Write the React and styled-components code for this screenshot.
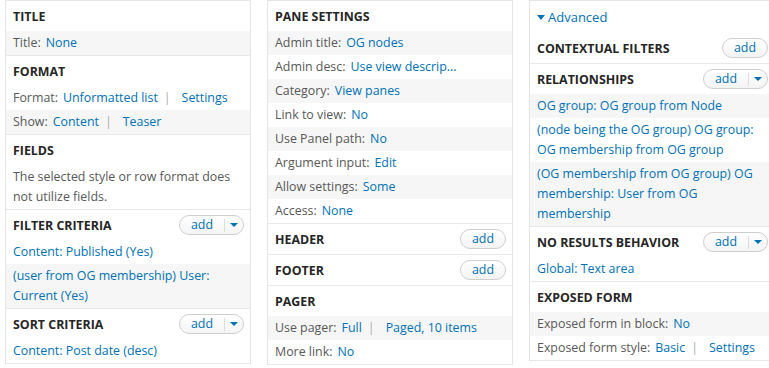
import React from "react";
import styled, { createGlobalStyle } from "styled-components";

const GlobalStyle = createGlobalStyle`
  html, body {
    margin: 0;
    padding: 0;
    background: #fff;
    overflow: hidden;
  }
  body {
    font-family: "Open Sans", "DejaVu Sans", sans-serif;
    font-size: 12.4px;
    color: #585858;
  }
`;

const Page = styled.div`
  display: flex;
  align-items: flex-start;
  gap: 16px;
  padding-left: 5px;
  width: 820px;
`;

const Column = styled.div`
  flex: 0 0 246px;
  box-sizing: border-box;
  border: 1px solid #e4e4e4;
  border-bottom: none;
`;

const Section = styled.div`
  border-bottom: 1px solid #e8e8e8;
`;

const Header = styled.div`
  display: flex;
  align-items: center;
  justify-content: space-between;
  height: 30px;
  padding: 0 6px 0 7px;
  font-weight: 700;
  color: #262626;
  text-transform: uppercase;
`;

const Row = styled.div`
  padding: 2px 7px;
  line-height: 20px;
  background: ${({ $alt }) => ($alt ? "#f6f6f6" : "transparent")};
`;

const Desc = styled.div`
  padding: 2px 7px;
  line-height: 20px;
`;

const Label = styled.span`
  margin-right: 5px;
`;

const Link = styled.a`
  color: #0071b8;
  text-decoration: none;
`;

const Pipe = styled.span`
  color: #aaa;
  margin: 0 11px 0 6px;
`;

const AddButton = styled.span`
  display: inline-flex;
  align-items: center;
  height: 20px;
  box-sizing: border-box;
  border: 1px solid #cfcfcf;
  border-radius: 10px;
  background: linear-gradient(#ffffff, #f4f4f4);
  font-weight: 400;
  text-transform: none;
  color: #0071b8;
`;

const ButtonLabel = styled.span`
  padding: 0 11px;
  line-height: 18px;
`;

const ButtonArrow = styled.span`
  display: flex;
  align-items: center;
  justify-content: center;
  width: 18px;
  height: 13px;
  border-left: 1px solid #dcdcdc;
`;

const Advanced = styled.div`
  display: flex;
  align-items: center;
  gap: 3px;
  height: 32px;
  padding-left: 7px;
  font-size: 13px;
  color: #0071b8;
`;

function Triangle({ w = 8, h = 5 }) {
  return (
    <svg width={w} height={h} viewBox={`0 0 ${w} ${h}`}>
      <polygon points={`0,0 ${w},0 ${w / 2},${h}`} fill="#0071b8" />
    </svg>
  );
}

function Button({ dropdown }) {
  return (
    <AddButton>
      <ButtonLabel>add</ButtonLabel>
      {dropdown && (
        <ButtonArrow>
          <Triangle w={8} h={4} />
        </ButtonArrow>
      )}
    </AddButton>
  );
}

const columns = [
  [
    { title: "Title", rows: [{ label: "Title:", values: ["None"], alt: true }] },
    {
      title: "Format",
      rows: [
        { label: "Format:", values: ["Unformatted list", "Settings"] },
        { label: "Show:", values: ["Content", "Teaser"], alt: true },
      ],
    },
    { title: "Fields", desc: "The selected style or row format does not utilize fields." },
    {
      title: "Filter criteria",
      button: "dropdown",
      rows: [
        { values: ["Content: Published (Yes)"] },
        { values: ["(user from OG membership) User: Current (Yes)"], alt: true },
      ],
    },
    {
      title: "Sort criteria",
      button: "dropdown",
      rows: [{ values: ["Content: Post date (desc)"] }],
    },
  ],
  [
    {
      title: "Pane settings",
      rows: [
        { label: "Admin title:", values: ["OG nodes"], alt: true },
        { label: "Admin desc:", values: ["Use view descrip..."] },
        { label: "Category:", values: ["View panes"], alt: true },
        { label: "Link to view:", values: ["No"] },
        { label: "Use Panel path:", values: ["No"], alt: true },
        { label: "Argument input:", values: ["Edit"] },
        { label: "Allow settings:", values: ["Some"], alt: true },
        { label: "Access:", values: ["None"] },
      ],
    },
    { title: "Header", button: "plain" },
    { title: "Footer", button: "plain" },
    {
      title: "Pager",
      rows: [
        { label: "Use pager:", values: ["Full", "Paged, 10 items"], alt: true },
        { label: "More link:", values: ["No"] },
      ],
    },
  ],
  [
    { advanced: true },
    { title: "Contextual filters", button: "plain" },
    {
      title: "Relationships",
      button: "dropdown",
      rows: [
        { values: ["OG group: OG group from Node"], alt: true },
        { values: ["(node being the OG group) OG group: OG membership from OG group"] },
        { values: ["(OG membership from OG group) OG membership: User from OG membership"], alt: true },
      ],
    },
    {
      title: "No results behavior",
      button: "dropdown",
      rows: [{ values: ["Global: Text area"] }],
    },
    {
      title: "Exposed form",
      rows: [
        { label: "Exposed form in block:", values: ["No"], alt: true },
        { label: "Exposed form style:", values: ["Basic", "Settings"] },
      ],
    },
  ],
];

function SettingRow({ row }) {
  return (
    <Row $alt={row.alt}>
      {row.label && <Label>{row.label}</Label>}
      {row.values.map((value, i) => (
        <React.Fragment key={value}>
          {i > 0 && <Pipe>|</Pipe>}
          <Link href="#">{value}</Link>
        </React.Fragment>
      ))}
    </Row>
  );
}

function Block({ section }) {
  if (section.advanced) {
    return (
      <Advanced>
        <Triangle w={8} h={5} />
        Advanced
      </Advanced>
    );
  }
  return (
    <Section>
      <Header>
        {section.title}
        {section.button && <Button dropdown={section.button === "dropdown"} />}
      </Header>
      {section.desc && <Desc>{section.desc}</Desc>}
      {section.rows &&
        section.rows.map((row, i) => <SettingRow key={i} row={row} />)}
    </Section>
  );
}

export default function App() {
  return (
    <>
      <GlobalStyle />
      <Page>
        {columns.map((sections, c) => (
          <Column key={c}>
            {sections.map((section, i) => (
              <Block key={i} section={section} />
            ))}
          </Column>
        ))}
      </Page>
    </>
  );
}
